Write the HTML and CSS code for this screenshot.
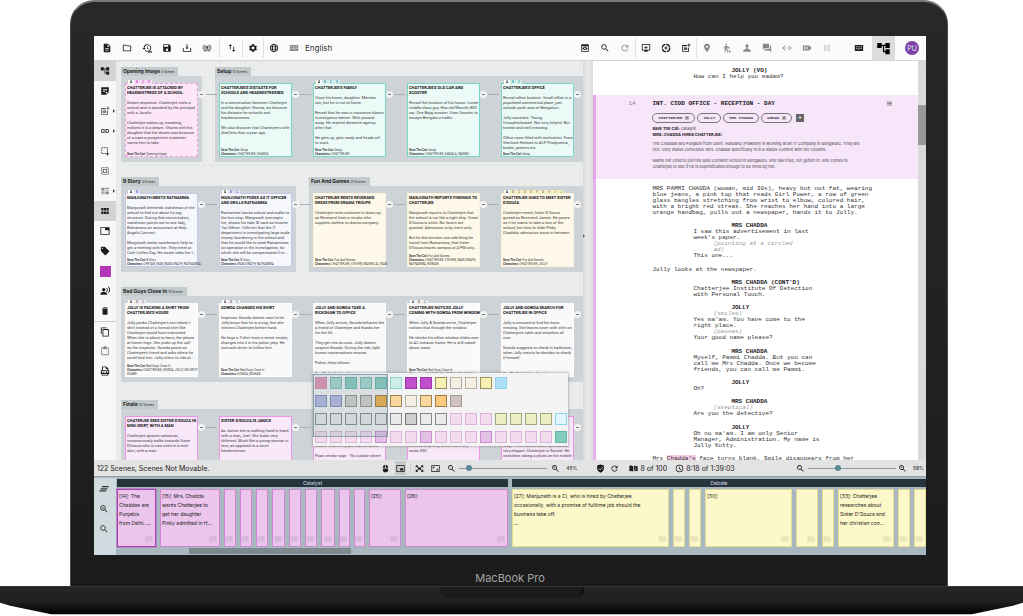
FILE: index.html
```html
<!DOCTYPE html>
<html lang="en">
<head>
<meta charset="utf-8">
<title>Screenplay board</title>
<link rel="stylesheet" href="styles.css">
</head>
<body>
<svg class="defs" aria-hidden="true">
<symbol id="doc" viewBox="0 0 24 24"><path d="M14 2H6c-1.100 0-2 .9-2 2v16c0 1.100.9 2 2 2h12c1.100 0 2-.9 2-2V8l-6-6zm2 16H8v-2h8v2zm0-4H8v-2h8v2zm-3-5V3.500L18.500 9H13z"/></symbol>
<symbol id="folder" viewBox="0 0 24 24"><path d="M9.200 6l2 2H20v10H4V6h5.200M10 4H4c-1.100 0-2 .9-2 2v12c0 1.100.9 2 2 2h16c1.100 0 2-.9 2-2V8c0-1.100-.9-2-2-2h-8l-2-2z"/></symbol>
<symbol id="history" viewBox="0 0 24 24"><path d="M13 3a9 9 0 0 0-9 9H1l4 4 4-4H6a7 7 0 1 1 2 5l-1.400 1.400A9 9 0 1 0 13 3zm-1 5v5l4.300 2.500.7-1.200-3.500-2.100V8z"/><path d="M15 20h9v3h-9z"/></symbol>
<symbol id="save" viewBox="0 0 24 24"><path d="M17 3H5a2 2 0 0 0-2 2v14c0 1.100.9 2 2 2h14c1.100 0 2-.9 2-2V7l-4-4zm-5 16a3 3 0 1 1 0-6 3 3 0 0 1 0 6zm3-10H5V5h10v4z"/></symbol>
<symbol id="download" viewBox="0 0 24 24"><path d="M11 3h2v8h3l-4 4-4-4h3zM2 12h2v7h16v-7h2v9H2z"/></symbol>
<symbol id="sync" viewBox="0 0 24 24"><g fill="none" stroke="currentColor" stroke-width="2"><path d="M6 4a10 10 0 0 0 0 15M18 4a10 10 0 0 1 0 15M9 6a6 6 0 0 0-1 10M15 6a6 6 0 0 1 1 10"/></g><path d="M4 20h7v-6zM20 20h-7v-6zM9 7h6v7H9z"/></symbol>
<symbol id="updown" viewBox="0 0 24 24"><path d="M8 3L4 7h3v8h2V7h3zM17 17V9h-2v8h-3l4 4 4-4z"/></symbol>
<symbol id="gear" viewBox="0 0 24 24"><path d="M19.400 13a7 7 0 0 0 0-2l2.100-1.600-2-3.500-2.500 1a7 7 0 0 0-1.700-1L15 3H9l-.4 2.900a7 7 0 0 0-1.700 1l-2.500-1-2 3.500L4.600 11a7 7 0 0 0 0 2l-2.100 1.600 2 3.500 2.500-1a7 7 0 0 0 1.700 1L9 21h6l.4-2.900a7 7 0 0 0 1.700-1l2.500 1 2-3.500zM12 15.500a3.500 3.500 0 1 1 0-7 3.500 3.500 0 0 1 0 7z"/></symbol>
<symbol id="globe" viewBox="0 0 24 24"><g fill="none" stroke="currentColor" stroke-width="2"><circle cx="12" cy="12" r="9"/><ellipse cx="12" cy="12" rx="4" ry="9"/><path d="M3 9h18M3 15h18"/></g></symbol>
<symbol id="keyboard" viewBox="0 0 24 24"><path fill-rule="evenodd" d="M2 5h20v14H2zM5 8v2h2V8zm4 0v2h2V8zm4 0v2h2V8zm4 0v2h2V8zM5 12v2h2v-2zm4 0v2h2v-2zm4 0v2h2v-2zm4 0v2h2v-2zM8 16v1h8v-1z"/></symbol>
<symbol id="preview" viewBox="0 0 24 24"><path fill-rule="evenodd" d="M3 3h18v18H3zM5 8v11h14V8zM6 13c3-5 9-5 12 0-3 5-9 5-12 0z"/><circle cx="12" cy="13" r="2" fill="#fff"/></symbol>
<symbol id="search" viewBox="0 0 24 24"><path d="M15.500 14h-.8l-.3-.3A6.500 6.500 0 1 0 13.700 14.400l.3.300v.8l5 5 1.500-1.500zM9.500 14a4.500 4.500 0 1 1 0-9 4.500 4.500 0 0 1 0 9z"/></symbol>
<symbol id="zoomin" viewBox="0 0 24 24"><path d="M15.500 14h-.8l-.3-.3A6.500 6.500 0 1 0 13.700 14.400l.3.300v.8l5 5 1.500-1.500zM9.500 14a4.500 4.500 0 1 1 0-9 4.500 4.500 0 0 1 0 9zM7 9h5v1H7zM9 7h1v5H9z"/></symbol>
<symbol id="refresh" viewBox="0 0 24 24"><path d="M17.600 6.400A8 8 0 1 0 19.700 14h-2.100A6 6 0 1 1 12 6c1.700 0 3.100.7 4.200 1.800L13 11h7V4z"/></symbol>
<symbol id="addscreen" viewBox="0 0 24 24"><path fill-rule="evenodd" d="M2 3h20v15h-6v3H8v-3H2zM4 5v11h16V5zM11 7h2v3h3v2h-3v3h-2v-3H8v-2h3z"/></symbol>
<symbol id="target" viewBox="0 0 24 24"><circle cx="12" cy="12" r="9" fill="none" stroke="currentColor" stroke-width="3" stroke-dasharray="12 2"/><path d="M11 8h2v3h3v2h-3v3h-2v-3H8v-2h3z"/></symbol>
<symbol id="noteadd" viewBox="0 0 24 24"><path fill-rule="evenodd" d="M3 5h11v2H5v12h12v-8h2v10H3zM7 9h7v2H7zm0 3h8v2H7zm0 3h8v2H7zM18 1h2v3h3v2h-3v3h-2V6h-3V4h3z"/></symbol>
<symbol id="pin" viewBox="0 0 24 24"><path d="M12 2a7 7 0 0 0-7 7c0 5 7 13 7 13s7-8 7-13a7 7 0 0 0-7-7zm0 9.500a2.500 2.500 0 1 1 0-5 2.500 2.500 0 0 1 0 5z"/></symbol>
<symbol id="walk" viewBox="0 0 24 24"><circle cx="10" cy="4" r="2"/><path d="M8 7L4 10v4h2v-3l2-1-2 12h2l2-7 2 2v5h2v-7l-2-2 1-3 3 3h3v-2h-2l-3-4zM16 17h2v2h3v3h-5z"/></symbol>
<symbol id="person" viewBox="0 0 24 24"><circle cx="12" cy="7" r="4"/><path d="M10 10h4v5h-4zM3 19c0-6 18-6 18 0v2H3z"/></symbol>
<symbol id="chat" viewBox="0 0 24 24"><path d="M2 2h15v10H6l-4 4zM19 6h3v16l-4-4H6v-4h13z"/></symbol>
<symbol id="code" viewBox="0 0 24 24"><path d="M7 6l-6 6 6 6 1.400-1.400L3.800 12l4.600-4.600zM17 6l6 6-6 6-1.400-1.400 4.600-4.600-4.600-4.600zM7 11h2v2H7zM11 11h2v2h-2zM15 11h2v2h-2z"/></symbol>
<symbol id="video" viewBox="0 0 24 24"><path fill-rule="evenodd" d="M2 6h15l5 4v4l-5 4H2zM5 9v6h3V9zm5 0v2h5V9zm0 4v2h5v-2z"/></symbol>
<symbol id="grid" viewBox="0 0 24 24"><path d="M5 4h3v16H5zM16 4h3v16h-3zM9 6h2v3H9zm4 0h2v3h-2zm-4 5h6v2H9zm0 4h2v3H9zm4 0h2v3h-2z"/></symbol>
<symbol id="tree" viewBox="0 0 24 24"><path d="M22 11V3h-7v3H9V3H2v8h7V8h2v10h4v3h7v-8h-7v3h-2V8h2v3z"/></symbol>
<symbol id="note" viewBox="0 0 24 24"><path fill-rule="evenodd" d="M3 3h18v12l-6 6H3zM7 8v2h10V8zm0 4v2h5v-2zM14 14v5l5-5z"/></symbol>
<symbol id="link" viewBox="0 0 24 24"><path d="M4 12a3 3 0 0 1 3-3h4V7H7a5 5 0 0 0 0 10h4v-2H7a3 3 0 0 1-3-3zm4 1h8v-2H8zm9-6h-4v2h4a3 3 0 0 1 0 6h-4v2h4a5 5 0 0 0 0-10z"/></symbol>
<symbol id="select" viewBox="0 0 24 24"><path fill="none" stroke="currentColor" stroke-width="2" stroke-dasharray="3 2" d="M18 14V4H4v14h10"/><path d="M17 15h2v3h3v2h-3v3h-2v-3h-3v-2h3z"/></symbol>
<symbol id="selectall" viewBox="0 0 24 24"><path fill="none" stroke="currentColor" stroke-width="2" stroke-dasharray="3 1" d="M4 4h16v16H4z"/><path fill-rule="evenodd" d="M7 7h10v10H7zm2 2v6h6V9z"/></symbol>
<symbol id="layout" viewBox="0 0 24 24"><path d="M3 4h8v7H3zM13 4h8v3h-8zM13 9h8v2h-8zM3 13h8v3H3zM3 18h8v2H3zM13 13h8v7h-8z"/></symbol>
<symbol id="modules" viewBox="0 0 24 24"><path d="M3 5h5v6H3zM9 5h6v6H9zM16 5h5v6h-5zM3 13h5v6H3zM9 13h6v6H9zM16 13h5v6h-5z"/></symbol>
<symbol id="tab" viewBox="0 0 24 24"><path fill-rule="evenodd" d="M1 3h22v18H1zM3 5v14h18V10h-9V5z"/></symbol>
<symbol id="tag" viewBox="0 0 24 24"><path d="M21.400 11.600l-9-9C12 2.200 11.500 2 11 2H4a2 2 0 0 0-2 2v7c0 .5.2 1 .6 1.400l9 9a2 2 0 0 0 2.800 0l7-7a2 2 0 0 0 0-2.800zM5.500 7a1.500 1.500 0 1 1 0-3 1.500 1.500 0 0 1 0 3z"/></symbol>
<symbol id="voice" viewBox="0 0 24 24"><circle cx="9" cy="9" r="4"/><path d="M1 21v-3c0-5 16-5 16 0v3zM15 5.500c1.700 2 1.700 5 0 7l1.600 1.600c2.700-3 2.700-7.300 0-10.200zM19 2.500c4 4 4 9 0 13l1.500 1.500c5-5 5-11 0-16z"/></symbol>
<symbol id="trash" viewBox="0 0 24 24"><path d="M6 19c0 1.100.9 2 2 2h8c1.100 0 2-.9 2-2V7H6zM19 4h-3.500l-1-1h-5l-1 1H5v2h14z"/></symbol>
<symbol id="copy" viewBox="0 0 24 24"><path fill-rule="evenodd" d="M2 1h14v2H4v14H2zM6 5h15v18H6zm2 2v14h11V7z"/></symbol>
<symbol id="paste" viewBox="0 0 24 24"><path fill-rule="evenodd" d="M3 3h6a3 3 0 0 1 6 0h6v19H3zm2 2v15h14V5h-2v3H7V5z"/></symbol>
<symbol id="pdf" viewBox="0 0 24 24"><path fill-rule="evenodd" d="M5 1h10l5 5v4h2v9h-2v4H4v-4H2v-9h3zm2 2v7h11V7h-4V3zM6 19v2h12v-2zM5 12v5h2v-2h2v-3zm5 0v5h4v-5zm6 0v5h1v-2h3v-3z"/></symbol>
<symbol id="mouse" viewBox="0 0 24 24"><path d="M5 10V8a7 7 0 0 1 6-6v8zM13 2a7 7 0 0 1 6 6v2h-6zM5 12h14v3a7 7 0 0 1-14 0z"/></symbol>
<symbol id="pip" viewBox="0 0 24 24"><path fill-rule="evenodd" d="M1 3h22v18H1zM3 5v14h18V5zM11 11h8v6h-8z"/></symbol>
<symbol id="fit" viewBox="0 0 24 24"><path d="M2 3h6L6 6l3 2-1 2-4-2-2 2zM22 3h-6l2 3-3 2 1 2 4-2 2 2zM2 21h6l-2-3 3-2-1-2-4 2-2-2zM22 21h-6l2-3-3-2 1-2 4 2 2-2zM8 9h8v6H8z"/></symbol>
<symbol id="aspect" viewBox="0 0 24 24"><path fill-rule="evenodd" d="M1 3h22v18H1zM3 5v14h18V5zM5 7h5v2H7v3H5zM19 17h-5v-2h3v-3h2z"/></symbol>
<symbol id="shield" viewBox="0 0 24 24"><path d="M12 1L3 4v8c0 5 4 9 9 11 5-2 9-6 9-11V4z"/><path d="M7 12l4 4 7-8" fill="none" stroke="#ddd" stroke-width="2"/></symbol>
<symbol id="book" viewBox="0 0 24 24"><path d="M1 5c4-2 7-1 10 1v14c-3-2-6-2-10-1zM13 6l4-3v11l-4 4zM18 5h5v14c-4-1-7-1-10 1 3-3 5-4 5-4z"/></symbol>
<symbol id="clock" viewBox="0 0 24 24"><path d="M12 2a10 10 0 1 0 0 20 10 10 0 0 0 0-20zm0 18a8 8 0 1 1 0-16 8 8 0 0 1 0 16zM11 7h2v5l4 3-1 1.500-5-3.500z"/></symbol>
<symbol id="lines" viewBox="0 0 24 24"><path d="M7 5h16v3H7zM4 10h16v3H4zM1 15h16v3H1z"/></symbol>
</svg>
<div class="laptop">
<div class="lid">
<main class="app">
<header class="toolbar">
<button aria-label="New"><svg><use href="#doc"/></svg></button>
<button aria-label="Open"><svg><use href="#folder"/></svg></button>
<button aria-label="History"><svg><use href="#history"/></svg></button>
<button aria-label="Save"><svg><use href="#save"/></svg></button>
<button aria-label="Export"><svg><use href="#download"/></svg></button>
<button aria-label="Sync" class="mid"><svg><use href="#sync"/></svg></button>
<i class="rule wide"></i>
<button aria-label="Sort"><svg><use href="#updown"/></svg></button>
<i class="rule"></i>
<button aria-label="Settings"><svg><use href="#gear"/></svg></button>
<i class="rule"></i>
<button aria-label="Language"><svg><use href="#globe"/></svg></button>
<button aria-label="Input method" class="dim"><svg><use href="#keyboard"/></svg></button>
<span class="lang">English</span>
<span class="spacer"></span>
<button aria-label="Preview"><svg><use href="#preview"/></svg></button>
<button aria-label="Search"><svg><use href="#search"/></svg></button>
<button aria-label="Reload" class="dim"><svg><use href="#refresh"/></svg></button>
<i class="rule"></i>
<button aria-label="Add screen"><svg><use href="#addscreen"/></svg></button>
<button aria-label="Add beat"><svg><use href="#target"/></svg></button>
<button aria-label="Add scene"><svg><use href="#noteadd"/></svg></button>
<i class="rule"></i>
<button aria-label="Location" class="dim"><svg><use href="#pin"/></svg></button>
<button aria-label="Action" class="dim"><svg><use href="#walk"/></svg></button>
<button aria-label="Character" class="dim"><svg><use href="#person"/></svg></button>
<button aria-label="Dialogue" class="dim"><svg><use href="#chat"/></svg></button>
<button aria-label="Parenthetical" class="dim"><svg><use href="#code"/></svg></button>
<button aria-label="Shot" class="dim"><svg><use href="#video"/></svg></button>
<button aria-label="Transition" class="faint"><svg><use href="#grid"/></svg></button>
<button aria-label="Keyboard" class="keys"><svg><use href="#keyboard"/></svg></button>
<button aria-label="Structure" class="structure"><svg><use href="#tree"/></svg></button>
<button aria-label="Account" class="avatar">PU</button>
</header>

<div class="panes">
<nav class="side">
<button aria-label="Structure" class="on"><svg><use href="#tree"/></svg></button>
<button aria-label="Notes"><svg><use href="#note"/></svg></button>
<button aria-label="Add card" class="more mid"><svg><use href="#noteadd"/></svg></button>
<button aria-label="Link" class="more"><svg><use href="#link"/></svg></button>
<button aria-label="Select area"><svg><use href="#select"/></svg></button>
<button aria-label="Select all" class="mid"><svg><use href="#selectall"/></svg></button>
<button aria-label="Layout" class="more dim"><svg><use href="#layout"/></svg></button>
<button aria-label="Group by act" class="on"><svg><use href="#modules"/></svg></button>
<button aria-label="Tabs"><svg><use href="#tab"/></svg></button>
<button aria-label="Tags"><svg><use href="#tag"/></svg></button>
<button aria-label="Colour"><span class="colour"></span></button>
<button aria-label="Voice"><svg><use href="#voice"/></svg></button>
<button aria-label="Delete"><svg><use href="#trash"/></svg></button>
<button aria-label="Copy" class="ruled"><svg><use href="#copy"/></svg></button>
<button aria-label="Paste" class="dim"><svg><use href="#paste"/></svg></button>
<button aria-label="PDF"><svg><use href="#pdf"/></svg></button>
</nav>

<section class="board">
<div class="row">
<section class="group"><h2>Opening Image <small>4 Scenes</small></h2><div class="cards">
<article class="card pink"><span class="tags"><b>A</b><b>B</b><b>C</b><b>D</b></span><h3>CHATTERJEE IS ATTACKED BY
HEADMISTRESS OF A SCHOOL</h3><p>Dream sequence. Chatterjee visits a
school and is attacked by the principal
with a Javelin.

Chatterjee wakes up, sweating,
realizes it is a dream. Shares with his
daughter that the dream was because
of a case a prospective customer
wants him to take.</p><footer><b>Save The Cat:</b> Opening Image</footer><i class="next"></i></article>
</div></section>
<section class="group"><h2>Setup <small>10 Scenes</small></h2><div class="cards">
<article class="card teal"><h3>CHATTERJEE'S DISTASTE FOR
SCHOOLS AND HEADMISTRESSES</h3><p>In a conversation between Chatterjee
and his daughter Shanta, we discover
his distaste for schools and
headmistresses.

We also discover that Chatterjee's wife
died less than a year ago.</p><footer><b>Save The Cat:</b> Setup
<b>Characters:</b> CHATTERJEE, SHANTA</footer><i class="next"></i></article>
<article class="card teal"><span class="tags"><b>A</b><b>B</b><b>C</b><b>D</b></span><h3>CHATTERJEE'S FAMILY</h3><p>Show his home, daughter. Mention
son, but he is not at home.

Reveal that he was in insurance claims
investigation before. Wife passed
away. He started detective agency
after that.

He gets up, gets ready and heads off
to work.</p><footer><b>Save The Cat:</b> Setup
<b>Characters:</b> CHATTERJEE</footer><i class="next"></i></article>
<article class="card teal"><h3>CHATTERJEE'S OLD CAR AND
SCOOTER</h3><p>Reveal the location of his house. Lower
middle class guy. Has old Maruthi 800
car. One Bajaj scooter. Uses Scooter to
escape Bengaluru traffic.</p><footer><b>Save The Cat:</b> Setup
<b>Characters:</b> CHATTERJEE, KAMALA, MANNU</footer><i class="next"></i></article>
<article class="card teal"><span class="tags"><b>A</b><b>B</b><b>C</b></span><h3>CHATTERJEE'S OFFICE</h3><p>Reveal office location. Small office in a
populated commercial place, just
outside posh area of Bengaluru.

Jolly assistant. Young.
Unsophisticated. Not very helpful. But
honest and well meaning.

Office room filled with motivation. From
Sherlock Holmes to ACP Pradyumna,
books, posters etc.</p><footer><b>Save The Cat:</b> Setup</footer><i class="next"></i></article>
</div></section>
</div>

<div class="row">
<section class="group"><h2>B Story <small>5 Scenes</small></h2><div class="cards">
<article class="card blue"><span class="tags"><b>A</b><b>B</b></span><h3>MANJUNATH MEETS RATNAMMA</h3><p>Manjunath befriends watchman of the
school to find out about its org-
structure. During that conversation,
watchman points out to one lady,
Ratnamma an accountant at Holy
Angels Convent.

Manjunath seeks watchman's help to
get a meeting with her. They meet at
Cafe Coffee Day. He sweet talks her t...</p><footer><b>Save The Cat:</b> B Story
<b>Characters:</b> CHETAN, MAN, MANJUNATH, RATNAMMA</footer><i class="next"></i></article>
<article class="card blue"><span class="tags"><b>A</b><b>B</b><b>C</b></span><h3>MANJUNATH POSES AS IT OFFICER
AND GRILLS RATNAMMA</h3><p>Ratnamma leaves school and walks to
the bus stop. Manjunath intercepts
her, shows his fake ID card as Income
Tax Officer. Tells her that the IT
department is investigating large scale
money laundering in the school and
that he would like to seek Ratnammas
co-operation in the investigation, for
which she will be compensated if ev...</p><footer><b>Save The Cat:</b> B Story
<b>Characters:</b> MANJUNATH, RATNAMMA</footer><i class="next"></i></article>
</div></section>
<section class="group"><h2>Fun And Games <small>20 Scenes</small></h2><div class="cards">
<article class="card cream"><h3>CHATTERJEE RENTS REVERAND
DRESS FROM DRAMA TROUPE</h3><p>Chatterjee rents costume to dress up
as Reverand from a vendor who
supplies clothes to drama company.</p><footer><b>Save The Cat:</b> Fun And Games
<b>Characters:</b> CHATTERJEE, STEVEN, MADHULAL, MAN</footer><i class="next"></i></article>
<article class="card cream"><h3>MANJUNATH REPORTS FINDINGS TO
CHATTERJEE</h3><p>Manjunath reports to Chatterjee that
the school is run like a tight ship. Sister
D'Souza is strict. No favors are
granted. Admission is by merit only.

But he did mention one odd thing he
found from Ratnamma, that Sister
D'Souza leaves campus at 4 PM only...</p><footer><b>Save The Cat:</b> Fun And Games
<b>Characters:</b> CHATTERJEE, STEVEN, MANJUNATH,
RATNAMMA, WOMAN</footer><i class="next"></i></article>
<article class="card cream"><span class="tags"><b>A</b><b>B</b><b>C</b><b>D</b><b>E</b><b>F</b><b>G</b><b>H</b><b>I</b><b>J</b></span><h3>CHATTERJEE GOES TO MEET SISTER
D'SOUZA</h3><p>Chatterjee meets Sister D'Souza
guised as Reverend James. He poses
as if he wants to take a tour of the
school, but tries to slide Pinky
Chadda's admission issue in between.</p><footer><b>Save The Cat:</b> Fun And Games
<b>Characters:</b> CHATTERJEE, JOLLY</footer><i class="next"></i></article>
</div></section>
</div>

<div class="row">
<section class="group"><h2>Bad Guys Close In <small>19 Scenes</small></h2><div class="cards">
<article class="card plain"><span class="tags"><b>A</b><b>B</b><b>C</b></span><h3>JOLLY IS PACKING A SHIRT FROM
CHATTERJEE'S HOUSE</h3><p>Jolly packs Chatterjee's torn blank t-
shirt instead of a formal shirt like
Chatterjee would have instructed.
When she is about to leave, the phone
at home rings. She picks up the call -
its the inspector. Gowda poses as
Chatterjee's friend and asks where he
could find him. Jolly offers to ride al...</p><footer><b>Save The Cat:</b> Bad Guys Close In
<b>Characters:</b> CHATTERJEE, GOWDA, JOLLY, SECURITY
GUARD</footer><i class="next"></i></article>
<article class="card plain"><span class="tags"><b>A</b><b>B</b><b>C</b></span><h3>GOWDA CHANGES HIS SHIRT</h3><p>Inspector Gowda doesnt want to let
Jolly know that he is a cop, lest she
informs Chatterjee before hand.

He buys a T-shirt from a street vendor,
changes into it in his police jeep. He
instructs driver to follow him.</p><footer><b>Save The Cat:</b> Bad Guys Close In
<b>Characters:</b> GOWDA, MOHAN</footer><i class="next"></i></article>
<article class="card plain"><h3>JOLLY AND GOWDA TAKE A
RICKSHAW TO OFFICE</h3><p>When Jolly arrives, Gowda behaves like
a friend of Chatterjee and thanks her
for the lift.

They get into an auto. Jolly doesnt
suspect Gowda. During the ride, light
humor conversations ensues.

Police Jeep follows.</p><footer><b>Save The Cat:</b> Bad Guys Close In
</footer><i class="next"></i></article>
<article class="card plain"><span class="tags"><b>A</b><b>B</b><b>C</b></span><h3>CHATTERJEE NOTICES JOLLY
COMING WITH GOWDA FROM WINDOW</h3><p>When Jolly &amp; Gowda arrive, Chatterjee
notices that through the window.

He climbs his office window slides over
to AC exhaust frame. He is still naked
above waist.</p><footer><b>Save The Cat:</b> Bad Guys Close In
<b>Characters:</b> CHATTERJEE, GOWDA, JOLLY, MAN
</footer><i class="next"></i></article>
<article class="card plain"><h3>JOLLY AND GOWDA SEARCH FOR
CHATTERJEE IN OFFICE</h3><p>Jolly is amused to find her boss
missing. She leaves cover with shirt on
Chatterjee's table and searches all
over.

Gowda suggests to check in bathroom,
when Jolly resists he decides to check
it himself.</p><footer><b>Save The Cat:</b> Bad Guys Close In
</footer><i class="next"></i></article>
</div></section>
</div>

<div class="row finale">
<section class="group"><h2>Finale <small>20 Scenes</small></h2><div class="cards">
<article class="card magenta"><h3>CHATERJEE SEES SISTER D'SOUZA IN
MINI-SKIRT, WITH A MAN</h3><p>Chatterjee ignores salesman,
unconsciously walks towards Sister
D'Souza who is now seen in a mini-
skirt, with a man.</p><i class="next"></i></article>
<article class="card magenta"><h3>SISTER D'SOUZA IS JANICE</h3><p>As Janice she is walking hand-in-hand
with a man, Joel. She looks very
different. Much like a young woman in
love, as opposed to a strict
headmistress.</p><i class="next"></i></article>
<article class="card magenta low"><p>vendor what the place was all about.

Paan vendor says - "Its a place where</p><i class="next"></i></article>
<article class="card magenta low"><p>membership only and a trial entry
costs 500.</p><i class="next"></i></article>
<article class="card magenta low"><p>stage. Their dance looks spectacular,
very elegant. Chatterjee is floored. He
considers taking a photo on his mobile</p><i class="next"></i></article>
</div></section>
</div>

<div class="minimap">
<i class="rose"></i><i class="mint"></i><i class="jade"></i><i class="mint"></i><i class="jade"></i><i class="ice"></i><i class="violet"></i><i class="violet"></i><i class="lemon"></i><i class="ivory"></i><i class="ivory"></i><i class="lemon"></i><i class="sky"></i>
<i class="peri row2"></i><i class="peri"></i><i class="sand"></i><i class="sand"></i><i class="amber"></i><i class="peach"></i><i class="ivory"></i><i class="peach"></i><i class="orange"></i><i class="taupe"></i>
<i class="clear row2"></i><i class="clear"></i><i class="clear"></i><i class="clear"></i><i class="clear"></i><i class="clear"></i><i class="grey"></i><i class="clear"></i><i class="clear"></i><i class="blush"></i><i class="blush"></i><i class="blush"></i><i class="lime"></i><i class="lime"></i><i class="lime"></i><i class="lime"></i><i class="frost"></i>
<i class="blush"></i><i class="blush"></i><i class="blush"></i><i class="blush"></i><i class="orchid"></i><i class="blush"></i><i class="blush"></i><i class="orchid"></i><i class="blush"></i><i class="blush"></i><i class="blush"></i><i class="orchid"></i><i class="blush"></i><i class="blush"></i><i class="blush"></i><i class="blush"></i><i class="jade"></i>
<span class="view"></span>
</div>
</section>

<div class="splitter"></div>

<section class="script">
<div class="page">
<div class="opening"><b>JOLLY (VO)</b><span>How can I help you madam?</span></div>
<section class="scene">
<h2><span>14</span>INT. CIOD OFFICE - RECEPTION - DAY<svg class="menu" viewBox="0 0 10 10"><path d="M0 1h10v2H0zM0 4h10v2H0zM0 7h10v2H0z"/></svg></h2>
<div class="chips"><span>CHATTERJEE <i>×</i></span><span>JOLLY</span><span>MRS CHADDA</span><span>WOMAN <i>×</i></span><button aria-label="Add character">+</button></div>
<p><b>Save The Cat:</b> Catalyst</p>
<p><b>MRS. CHADDA HIRES CHATTERJEE:</b></p>
<p class="synopsis">The Chaddas are Punjabis from Delhi. Husband (Prakesh) is working at an IT Company in Bengaluru. They are
rich. Very status conscious. Mrs. Chadda specifically is in a status-contest with her cousins.</p>
<p class="synopsis">Wants her child to join the best Convent School in Bengaluru. She has tried, not gotten in. She comes to
Chatterjee to see if he is sophisticated enough to be hired by her.</p>
</section>
<div class="body">
<p>MRS PAMMI CHADDA (woman, mid 30s), heavy but not fat, wearing
blue jeans, a pink top that reads Girl Power, a row of green
glass bangles stretching from wrist to elbow, colored hair,
with a bright red streak. She reaches her hand into a large
orange handbag, pulls out a newspaper, hands it to Jolly.</p>
<div class="speech"><b>MRS CHADDA</b><span>I saw this advertisement in last
week's paper.</span><em>(pointing at a circled
ad)</em><span>This one...</span></div>
<p>Jolly looks at the newspaper.</p>
<div class="speech"><b>MRS CHADDA (CONT'D)</b><span>Chatterjee Institute Of Detection
with Personal Touch.</span></div>
<div class="speech"><b>JOLLY</b><em>(smiles)</em><span>Yes ma'am. You have come to the
right place.</span><em>(pauses)</em><span>Your good name please?</span></div>
<div class="speech"><b>MRS CHADDA</b><span>Myself, Pammi Chadda. But you can
call me Mrs Chadda. Once we become
friends, you can call me Pammi.</span></div>
<div class="speech"><b>JOLLY</b><span>Oh?</span></div>
<div class="speech"><b>MRS CHADDA</b><em>(skeptical)</em><span>Are you the detective?</span></div>
<div class="speech"><b>JOLLY</b><span>Oh no ma'am. I am only Senior
Manager, Administration. My name is
Jolly Kutty.</span></div>
<p>Mrs <mark>Chadda's</mark> face turns blank. Smile disappears from her</p>
</div>
</div>
<div class="scrollbar"><i></i></div>
</section>
</div>

<div class="status">
<div class="statusleft">
<span class="count">122 Scenes, Scenes Not Movable.</span>
<span class="spacer"></span>
<button aria-label="Mouse"><svg><use href="#mouse"/></svg></button>
<button aria-label="Minimap" class="on"><svg><use href="#pip"/></svg></button>
<i class="rule"></i>
<button aria-label="Fit"><svg><use href="#fit"/></svg></button>
<button aria-label="Actual size"><svg><use href="#aspect"/></svg></button>
<button aria-label="Zoom out"><svg><use href="#search"/></svg></button>
<input type="range" aria-label="Board zoom" value="8">
<button aria-label="Zoom in"><svg><use href="#zoomin"/></svg></button>
<span class="percent">45%</span>
</div>
<div class="statusright">
<button aria-label="Safe"><svg><use href="#shield"/></svg></button>
<button aria-label="Refresh"><svg><use href="#refresh"/></svg></button>
<button aria-label="Pages" class="gap"><svg><use href="#book"/></svg></button>
<span>8 of 100</span>
<button aria-label="Time" class="gap"><svg><use href="#clock"/></svg></button>
<span>8:18 of 1:39:03</span>
<span class="spacer"></span>
<button aria-label="Zoom out"><svg><use href="#search"/></svg></button>
<input type="range" aria-label="Script zoom" value="33">
<button aria-label="Zoom in"><svg><use href="#zoomin"/></svg></button>
<span class="percent">58%</span>
</div>
</div>

<section class="timeline">
<nav>
<button aria-label="Lines"><svg><use href="#lines"/></svg></button>
<button aria-label="Zoom in"><svg><use href="#zoomin"/></svg></button>
<button aria-label="Zoom out"><svg><use href="#search"/></svg></button>
</nav>
<div class="track">
<div class="acts">
<section><h2>Catalyst</h2><div class="strip catalyst">
<p class="current">[14]: The
Chaddas are
Punjabis
from Delhi. ...</p><p>[15]: Mrs. Chadda
wants Chatterjee to
get her daughter
Pinky admitted in H...</p><p></p><p></p><p></p><p></p><p></p><p></p><p></p><p></p><p></p><p>[25]:</p><p>[26]:</p>
</div></section>
<section><h2>Debate</h2><div class="strip debate">
<p>[27]: Manjunath is a CI, who is hired by Chatterjee
occasionally, with a promise of fulltime job should the
business take off.
...</p><p></p><p></p><p>[30]:</p><p></p><p></p><p>[33]: Chatterjee
researches about
Sister D'Souza and
her christian con...</p><p></p><p></p>
</div></section>
</div>
<div class="hscroll"><i></i></div>
</div>
</section>
</main>
<div class="brand">MacBook Pro</div>
</div>
<div class="base"><i></i></div>
</div>
</body>
</html>
```
FILE: styles.css
```css
* { box-sizing: border-box; }
body { margin: 0; background: #fff; color: #222; font-family: Inter, "Noto Sans", sans-serif; }
h2, h3, p { margin: 0; font-size: inherit; }
button { display: flex; align-items: center; justify-content: center; padding: 0; border: 0; background: none; color: #1c1c1c; font: inherit; flex: none; }
svg { width: 10px; height: 10px; fill: currentColor; }
i { font-style: normal; }
.defs { display: none; }
.spacer { flex: 1; }
.mid { color: #555; }
.dim { color: #888; }
.faint { color: #ccc; }
.rule { width: 1px; height: 20px; background: #e2e2e2; }

.laptop { height: 100vh; display: flex; flex-direction: column; overflow: hidden; }
.lid { flex: 1; min-height: 0; display: flex; flex-direction: column; margin: 0 75px 0 70px; padding: 34px 21px 0 23px; background: linear-gradient(#282828, #202020 70%, #1b1b1b); border: 1px solid #4a4a4a; border-top: 2px solid #777; border-bottom: 0; border-radius: 24px 24px 0 0; }
.brand { height: 31px; padding-top: 16px; text-align: center; font-size: 11px; line-height: 14px; color: #a5a5a5; }
.base { height: 30px; display: flex; justify-content: center; background: linear-gradient(#262626, #202020 50%, #0a0a0a 80%, #000); border-top: 1px solid #333; clip-path: polygon(0 0, 100% 0, 100% 56%, 99% 66%, 95% 94%, 5% 94%, 1% 66%, 0 56%); }
.base i { width: 144px; height: 11px; background: #1b1b1b; border-radius: 0 0 8px 8px; border-right: 2px solid #111; }

.app { flex: 1; min-height: 0; display: flex; flex-direction: column; background: #e6e6e6; overflow: hidden; }
.toolbar { height: 25px; flex: none; display: flex; align-items: center; padding: 0 7px 0 3px; background: #fbfbfb; border-bottom: 1px solid #d5d5d5; }
.toolbar button { width: 20px; height: 24px; }
.rule.wide { margin: 0 2px; }
.lang { font-size: 8px; margin-left: 1px; color: #333; }
.toolbar .keys { margin-left: 12px; }
.toolbar .structure { width: 23px; margin: 0 10px 0 3px; background: #dcdcdc; color: #000; }
.structure svg { width: 15px; height: 15px; }
.toolbar .avatar { width: 14px; height: 14px; border-radius: 50%; background: #7b3fa8; color: #eee; font-size: 7px; }
.toolbar .mid, .side .mid { color: #555; }
.toolbar .dim, .side .dim { color: #888; }
.toolbar .faint { color: #ccc; }

.panes { flex: 1; min-height: 0; display: grid; grid-template-columns: 22px 468fr 10px 333fr; }
.side { background: #f8f8f8; display: flex; flex-direction: column; }
.side button { height: 20px; position: relative; }
.side .on { background: #d3d3d3; }
.side .ruled { border-top: 1px solid #ccc; }
.side .more::after { content: ""; position: absolute; right: 1px; top: 8px; border: 2px solid transparent; border-left-color: #444; border-right: 0; }
.colour { width: 11px; height: 11px; background: #b434ba; }

.board { position: relative; overflow: hidden; padding: 6px 0 0 5px; background-color: #ebecec; background-image: linear-gradient(#e6e7e7 1px, transparent 1px), linear-gradient(90deg, #e6e7e7 1px, transparent 1px); background-size: 8px 8px; font-family: Roboto, sans-serif; }
.row { display: flex; gap: 13px; margin-bottom: 15px; }
.finale { padding-top: 3px; }
.group { flex: none; }
.group h2 { width: max-content; height: 9px; padding: 0 4px 0 2px; background: #c3cacc; font: bold 5px/9px Inter, sans-serif; color: #222; }
.group small { font-size: 3px; font-weight: normal; }
.cards { display: flex; gap: 21px; padding: 7px 4px 5px; background: #cdd3d6; }
.group:last-child .cards { padding-right: 9px; }
.card { position: relative; width: 73px; height: 74px; padding: 1px 0 0 1px; display: flex; flex-direction: column; border: 1px solid; font-size: 4px; line-height: 5px; white-space: pre; color: #3c3c3c; }
.card h3 { margin-bottom: 5px; color: #111; }
.card p { flex: 1 0 auto; }
.card footer { font-size: 3px; line-height: 4px; }
.low { padding-top: 26px; }
.pink { background: #fde6f8; border: 1px dashed #e4a0dc; }
.teal { background: #ebfaf7; border-color: #78d8c8; }
.blue { background: #f6f7fb; border-color: #c4c6ee; }
.cream { background: #fdf8e9; border-color: #fbf4dc; }
.plain { background: #f9f9f9; border-color: #fdfdfd; }
.magenta { background: #f9e8fa; border-color: #ec96e8; }
.tags { position: absolute; left: 2px; bottom: 100%; display: flex; font-size: 3px; line-height: 4px; }
.tags b { width: 6px; text-align: center; background: #eee; color: #888; }
.tags b:first-child { background: #fff; color: #000; }
.pink .tags b + b { color: #d75acb; background: #f8dcf3; }
.teal .tags b + b { color: #4aa; background: #d2eeea; }
.blue .tags b + b { color: #77c; background: #e3e4f4; }
.cream .tags b + b { color: #997; background: #f5f0c4; }
.next { position: absolute; left: 100%; top: 7px; width: 7px; height: 7px; margin-left: 1px; border-radius: 50%; background: #f3f3f3; }
.next::before { content: ""; position: absolute; left: 2px; top: 3px; width: 3px; height: 1px; background: #777; }
.next::after { content: ""; position: absolute; left: 8px; top: 3px; width: 11px; height: 1px; background: #aab1b4; }

.minimap { position: absolute; right: 15px; bottom: 14px; display: grid; grid-template-columns: repeat(17, 12px); gap: 6px 3px; padding: 4px 1px 3px 2px; background: #f4f4f4f4; box-shadow: 0 0 3px #888; }
.minimap i { height: 12px; border: 1px solid #999; }
.minimap .row2 { grid-column: 1; }
.minimap .rose { background: #e590b5; border-color: #d08aaa; }
.minimap .mint { background: #a8d6d0; border-color: #72bcb0; }
.minimap .jade { background: #83cbbf; border-color: #62b4a6; }
.minimap .ice { background: #cfeeea; border-color: #8cd4ca; }
.minimap .violet { background: #c04fcb; border-color: #9b36a6; }
.minimap .lemon { background: #f8f1b4; border-color: #97915c; }
.minimap .ivory { background: #f4efe2; border-color: #b5afa0; }
.minimap .sky { background: #aedff8; border-color: #8fd2f3; }
.minimap .peri { background: #b3b8df; border-color: #8288bd; }
.minimap .sand { background: #d2cfc8; border-color: #908c84; }
.minimap .amber { background: #f0b044; border-color: #987538; }
.minimap .peach { background: #fbd7a0; border-color: #9b8357; }
.minimap .orange { background: #fbca81; border-color: #9b7b45; }
.minimap .taupe { background: #d0c4c0; border-color: #a69a98; }
.minimap .clear { background: #e9eaea; border-color: #848989; }
.minimap .grey { background: #cfcfcf; border-color: #777; }
.minimap .blush { background: #f2dcee; border-color: #deb2dc; }
.minimap .orchid { background: #e4c0e6; border-color: #c98bd0; }
.minimap .lime { background: #ebedc3; border-color: #a1a481; }
.minimap .frost { background: #e2f4fd; border-color: #8fd4ec; }
.view { position: absolute; left: 0; top: 1px; width: 75px; height: 63px; background: #7d94a038; border: 1px solid #8a9fab; }

.splitter { display: flex; align-items: center; background: linear-gradient(90deg, #dadada, #e9e9e9 40%, #dcdcdc); }
.splitter::before { content: ""; margin-bottom: 50px; border: 2px solid transparent; border-left-color: #666; border-right: 0; }
.script { display: flex; min-height: 0; background: #fff; }
.page { flex: 1; min-width: 0; overflow: hidden; font: 6px/6px "Liberation Mono", monospace; color: #333; }
.page p, .speech span, .speech em { white-space: pre; }
.opening { height: 34px; padding: 7px 0 0 100px; }
.opening b { display: block; padding-left: 38px; color: #1c1c1c; }
.opening span { display: block; }
.scene { height: 84px; padding: 6px 26px 0 56px; border-left: 3px solid #e2a9e8; background: #f7e5f9; font: 4px/6px Inter, sans-serif; color: #444; }
.scene h2 { display: flex; font: bold 6px/6px "Liberation Mono", monospace; color: #222; }
.scene h2 span { width: 24px; margin-left: -24px; font-weight: normal; color: #888; }
.scene .menu { width: 5px; height: 5px; margin-left: auto; color: #888; }
.chips { display: flex; align-items: center; gap: 2px; margin: 6px 0 3px; font: bold 4px/8px "Liberation Mono", monospace; }
.chips span { padding: 0 5px; border: 1px solid #777; border-radius: 5px; }
.chips i { padding: 0 1px; background: #bbb; }
.chips button { width: 8px; height: 8px; margin-left: 2px; background: #666; color: #fff; font-size: 6px; }
.scene b { color: #222; }
.scene .synopsis { margin: 3px 0 5px; }
.body { display: flex; flex-direction: column; gap: 7px; padding: 7px 0 0 56px; border-left: 3px solid #e9b0ee; }
.speech { padding-left: 41px; }
.speech:has(em) { padding-bottom: 1px; }
.speech b, .speech span, .speech em { display: block; }
.speech b { padding-left: 38px; color: #1c1c1c; }
.speech em { padding-left: 20px; color: #999; }
mark { background: #f3cbe6; color: inherit; }
.scrollbar { width: 8px; padding-top: 44px; background: #dadada; }
.scrollbar i { display: block; height: 40px; background: #999; }

.status { flex: none; height: 16px; display: grid; grid-template-columns: 500fr 333fr; background: #e3e3e3; font-size: 7px; color: #222; }
.status > div { display: flex; align-items: center; min-width: 0; }
.status span { white-space: nowrap; }
.status button { width: 16px; height: 14px; }
.status svg { width: 9px; height: 9px; }
.status .on { background: #c8c8c8; width: 11px; margin: 0 4px 0 2px; }
.status .rule { height: 12px; background: #ccc; }
.count { padding-left: 3px; }
.statusleft { padding-right: 16px; }
.status .percent { width: 14px; font-size: 5px; text-align: right; }
.statusright { padding: 0 2px 0 0; }
.status .statusright button { width: 14px; }
.statusright .gap { margin-left: 5px; }
.status input { appearance: none; width: 88px; height: 6px; margin: 0; background: linear-gradient(#8a9a9e, #8a9a9e) center / 100% 1px no-repeat; }
.status input::-webkit-slider-thumb { appearance: none; width: 6px; height: 6px; border-radius: 50%; background: #5b8796; }

.timeline { flex: none; display: grid; grid-template-columns: 22px 1fr; padding-top: 1px; background: #a8b8be; border-top: 1px solid #8fa0a6; }
.timeline nav { background: #cfdbdf; padding-top: 1px; }
.timeline nav button { width: 20px; height: 20px; color: #333; }
.track { min-width: 0; }
.acts { display: grid; grid-template-columns: 391fr 414fr; gap: 4px; padding: 1px 0 0 1px; }
.acts section { min-width: 0; }
.timeline h2 { height: 8px; margin-bottom: 2px; background: #26343b; color: #dde; text-align: center; font: 5px/8px Inter, sans-serif; }
.strip { display: grid; gap: 4px; }
.strip p { position: relative; height: 58px; padding: 2px 1px; overflow: hidden; border: 1px solid; font-size: 5px; line-height: 9px; white-space: pre; }
.strip p::after { content: ""; position: absolute; right: 2px; bottom: 4px; width: 8px; height: 6px; background: #0001; border-radius: 2px; }
.catalyst { grid-template-columns: 39fr 60fr 12fr 12fr 12fr 13fr 12fr 12fr 14fr 11fr 11fr 32fr 103fr; }
.catalyst p { background: #ecc5ed; border-color: #cc89d2; }
.catalyst .current { border: 1px solid #b23bb8; outline: 1px solid #b23bb855; }
.debate { grid-template-columns: 157fr 12fr 12fr 87fr 22fr 12fr 56fr 12fr 12fr; }
.debate p { background: #fdf8c9; border-color: #e4dc94; }
.hscroll { height: 7px; margin-top: 1px; padding-left: 9%; }
.hscroll i { display: block; width: 22%; height: 6px; background: #7d898c; }
```
